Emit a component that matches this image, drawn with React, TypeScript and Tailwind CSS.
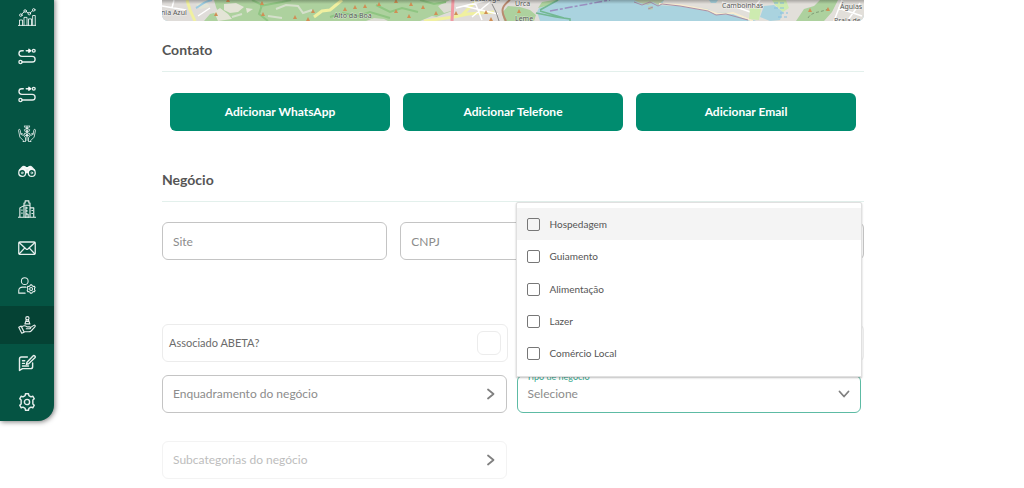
import { useState } from "react";
import type { ReactNode } from "react";
import clsx from "clsx";

type IconProps = { children: ReactNode; stroke?: number };

/** 24px line icon shared by the whole side menu. */
function Icon({ children, stroke = 1.6 }: IconProps) {
  return (
    <svg
      viewBox="0 0 24 24"
      className="size-[18px]"
      fill="none"
      stroke="currentColor"
      strokeWidth={stroke}
      strokeLinecap="round"
      strokeLinejoin="round"
      aria-hidden="true"
    >
      {children}
    </svg>
  );
}

function ChartIcon() {
  return (
    <Icon stroke={1.2}>
      <path d="M.5 23.2h23M2 23v-7h4v7M8 23V12.500h4V23M14 23v-8.500h4V23M19.500 23V10h3.500v13" />
      <circle cx="3.800" cy="9.500" r="1.700" />
      <circle cx="9.500" cy="4" r="1.700" />
      <circle cx="15" cy="7.500" r="1.700" />
      <circle cx="21" cy="2.500" r="1.700" />
      <path d="m5 8.200 3.200-3M11 4.900l2.600 1.700M16.300 6.400l3.300-2.800" />
    </Icon>
  );
}

function RouteIcon() {
  return (
    <Icon stroke={1.8}>
      <circle cx="3.300" cy="20" r="2.100" />
      <circle cx="21" cy="5" r="1.900" />
      <path d="M5.500 20H19a3.800 3.800 0 0 0 0-7.600H5A3.700 3.700 0 0 1 5 5h2M11 5h5" />
      <path d="m14.500 3 2.600 2-2.600 2z" fill="currentColor" />
    </Icon>
  );
}

function HarvestIcon() {
  return (
    <Icon stroke={1.1}>
      <path d="M12 22V2M12 6C9.500 6 8.500 4.500 8.500 2.500 11 2.500 12 4 12 6c0-2 1-3.500 3.500-3.500C15.500 4.500 14.500 6 12 6M12 11c-2.500 0-3.500-1.500-3.500-3.500C11 7.500 12 9 12 11c0-2 1-3.500 3.500-3.500C15.500 9.500 14.500 11 12 11M12 16c-2.500 0-3.500-1.500-3.500-3.500 2.500 0 3.500 1.500 3.500 3.500 0-2 1-3.500 3.500-3.500C15.500 14.500 14.500 16 12 16" />
      <path d="M7 23.500v-1.500L2.500 17.500.7 8.500c0-1.800 2.200-1.800 2.300 0l.8 5 2 1.500M3.800 13.500c.6-1.800 2.200-1 2.600 0l3.600 4.800v5.200H7M17 23.500v-1.500l4.500-4.500 1.800-9c0-1.800-2.200-1.800-2.300 0l-.8 5-2 1.500M20.200 13.500c-.6-1.800-2.200-1-2.600 0L14 18.300v5.200h3" />
    </Icon>
  );
}

function BinocularsIcon() {
  return (
    <Icon stroke={1.7}>
      <circle cx="5.600" cy="14.500" r="4.600" />
      <circle cx="18.400" cy="14.500" r="4.600" />
      <circle cx="5.600" cy="14.500" r="1.200" strokeWidth="1" />
      <circle cx="18.400" cy="14.500" r="1.200" strokeWidth="1" />
      <path d="M1.800 11 5.500 7C6.500 5.500 9.500 5.500 10.300 7.500h3.400C14.500 5.500 17.500 5.500 18.500 7l3.700 4" />
      <path d="M5 9c2-2.500 4.500-2.500 5.500-1h3c1-1.500 3.500-1.500 5.500 1-3-.3-5 2-5.500 5h-3C10 11 8 8.700 5 9Z" fill="currentColor" />
    </Icon>
  );
}

function CityIcon() {
  return (
    <Icon stroke={1.5}>
      <path d="M.5 23h23M2.500 23V10.500L8 7.500V23M8 7V4h1.500V1.200h5V4H16v6M16 23V10.500h5V23M8 7h8" />
      <path d="M12 10v1M12 14v1M12 18v1M5.300 13v1M5.300 17v1M18.500 14h1M18.500 18h1M10.500 23V9M13.500 23v-4" />
    </Icon>
  );
}

function MailIcon() {
  return (
    <Icon stroke={1.7}>
      <rect x="1" y="4" width="22" height="16.500" rx="1.500" />
      <path d="m1.800 5 9 8.300c.7.600 1.700.6 2.400 0l9-8.300M1.800 19.700l7-7.500M22.200 19.700l-7-7.500" />
    </Icon>
  );
}

function UserGearIcon() {
  return (
    <Icon stroke={1.4}>
      <circle cx="9" cy="5.500" r="4.500" />
      <path d="M9.500 21.500H1v-3.500c0-3 2.500-4.500 5-4.500h4.500" />
      <path d="m16 11.700.6-1.200h1.800l.6 1.200 1.500.9 1.400-.1.900 1.500-.8 1.200v1.700l.8 1.200-.9 1.500-1.400-.1-1.500.9-.6 1.300h-1.800l-.6-1.300-1.500-.9-1.400.1-.9-1.500.8-1.200v-1.700l-.8-1.200.9-1.500 1.400.1z" />
      <circle cx="17.500" cy="16" r="2" />
    </Icon>
  );
}

function HandPawnIcon() {
  return (
    <Icon stroke={1.5}>
      <circle cx="12.500" cy="3" r="2.200" />
      <path d="M11 5.200 9.200 10.500h6.600L14 5.200M10.700 7.200h3.600" />
      <path d="m1 15 3.200-1.500 4 8L5 23zM5 14.500c2.500-2 5-1.800 7 0h3.500c1.700 0 1.700 2.500 0 2.500H11M16.500 15.500l4.500-3c1.500-.8 2.700.7 1.500 2L17.500 20c-1 .8-1.700 1-3 1H8.200" />
    </Icon>
  );
}

function NoteIcon() {
  return (
    <Icon stroke={1.9}>
      <path d="M12.500 4H4.500A2.500 2.500 0 0 0 2 6.500V22l4-2.500h11a2.500 2.500 0 0 0 2.500-2.500v-5" />
      <path d="m12 11 8-8.300c1.500-1.500 4 .8 2.500 2.400L14.200 13l-3 .8zM6 9h3M6 12.500h2.500M6 16h8" />
    </Icon>
  );
}

function GearIcon() {
  return (
    <Icon stroke={1.9}>
      <path d="M9.500 3.500 10 1h4l.5 2.500 2.800 1.600 2.400-.8 2 3.400L19.800 9.400v5.200l1.900 1.700-2 3.400-2.400-.8-2.800 1.600L14 23h-4l-.5-2.500-2.800-1.600-2.400.8-2-3.400 1.900-1.700V9.400L2.300 7.700l2-3.400 2.400.8z" />
      <circle cx="12" cy="12" r="3.500" />
    </Icon>
  );
}

const menu = [
  { label: "Indicadores", icon: <ChartIcon /> },
  { label: "Rotas", icon: <RouteIcon /> },
  { label: "Roteiros", icon: <RouteIcon /> },
  { label: "Sustentabilidade", icon: <HarvestIcon /> },
  { label: "Atrativos", icon: <BinocularsIcon /> },
  { label: "Cidades", icon: <CityIcon /> },
  { label: "Mensagens", icon: <MailIcon /> },
  { label: "Usuários", icon: <UserGearIcon /> },
  { label: "Negócios", icon: <HandPawnIcon />, active: true },
  { label: "Formulários", icon: <NoteIcon /> },
  { label: "Configurações", icon: <GearIcon /> },
];

function Sidebar() {
  return (
    <nav className="-mt-0.5 flex h-[423px] w-[54px] shrink-0 flex-col overflow-hidden rounded-br-2xl bg-[#055443] text-white/90 shadow-[1px_1px_5px_rgba(0,0,0,0.5)]">
      {menu.map((item) => (
        <a
          key={item.label}
          href="#"
          aria-label={item.label}
          aria-current={item.active ? "page" : undefined}
          className={clsx("flex flex-1 items-center justify-center", item.active && "bg-[#054234]")}
        >
          {item.icon}
        </a>
      ))}
    </nav>
  );
}

const peaks = [
  [54, 14], [66, 0], [100, 3], [101, 14], [133, 17], [146, 19], [151, 11], [183, 9], [193, 7], [203, 6],
  [217, 4], [234, 1], [234, 11], [249, 4], [247, 16], [261, 7], [274, 13], [294, 13], [324, 12], [329, 19],
  [357, 11], [648, 10], [666, 9],
];

function MapStrip() {
  return (
    <div className="h-[21px] overflow-hidden rounded-b-md">
      <svg viewBox="0 0 702 21" preserveAspectRatio="xMidYMid slice" className="h-full w-full" role="img" aria-label="Mapa">
        <defs>
          <linearGradient id="map-shade" x1="0" y1="0" x2="0" y2="1">
            <stop offset="0" stopColor="#000" stopOpacity="0.250" />
            <stop offset="1" stopColor="#000" stopOpacity="0" />
          </linearGradient>
        </defs>
        <rect width="702" height="21" fill="#aad3df" />
        {/* land */}
        <path d="M0 0h397l-10 5-10 3-2 4 3 9H0z" fill="#dfdcd9" />
        <path d="M502 0h200v21H594l-8-3-18-6-14 1-8-4-30-4-16-1z" fill="#e2dfda" />
        <path d="M472 0h30l-6 5-5-3-5 3-8-2zM486 7l4-1 1 3-4 1z" fill="#b9c9a8" />
        {/* woods */}
        <path d="M52 0h238v11l-8 3-10 4-12 3H42l6-7 8-2-2-5z" fill="#add19e" />
        <path d="M346 6l12 1 10 3 6 5-2 6h-30l-2-8zM380 2l12-2h6l-14 6-8 2zM634 21l8-12 10-3 6-6h18l-6 12-8 9z" fill="#add19e" />
        <path d="M62 4l12-1 8 4-6 5-8 1-6-3zM52 12l6-4 8 6 4 5-14 2zM84 8l7 1-6 4zM34 4l10-3 4 6-10 2z" fill="#e3e4d6" />
        <path d="M276 6l12-6h4v10l-10 3zM204 21l8-3 10 1 4 2zM258 21l12-5 14 3v2z" fill="#dcdcd4" />
        <path d="M90 0l10 5-3 9 9 7M98 6l22-4 9-2M168 17l12-4 16 3 12-4 20 6M214 5l14 7 12-4 16 4M258 0l14 4 12-2" fill="none" stroke="#8fc582" strokeWidth="2" />
        <path d="M114 9l10-4 12 1 5 7 9-3M106 16l14 2M70 17l10-3" fill="none" stroke="#d5e0cb" strokeWidth="2" />
        {/* roads */}
        <path d="M25 0l3 10 5 11M152 17l8-6 8-1 12-10M300 15l14-14M262 21l30-4 14-3 26-2" fill="none" stroke="#f0f0a0" strokeWidth="3" />
        <path d="M12 0l-2 8M0 6l24 4M36 16l12-8M294 8l28-7M312 0l8 20M328 2l-18 15M302 6l34 8M560 2l34 12M598 0l-6 8M672 21l8-21M686 20l12-17M676 8l24 8" fill="none" stroke="#fff" strokeWidth="1.500" />
        <path d="M34 8c6-3 6-6 16-8" fill="none" stroke="#9ccbe0" strokeWidth="2" />
        <path d="M291 0l-1 21" stroke="#f09aa2" strokeWidth="3" />
        <path d="M348 0c-8 6-10 10-4 21" fill="none" stroke="#b98a70" strokeWidth="2" />
        <path d="M330 4l4 8 3 9" fill="none" stroke="#8a8a8a" strokeWidth="1" />
        <path d="M374 13l20 4 14 2v2M378 10l18-10M378 11l24 7" fill="none" stroke="#72b892" strokeWidth="1.500" />
        <path d="M388 11 448 0" stroke="#9a8fc0" strokeWidth="1.500" strokeDasharray="8 2 3 2" />
        {/* coast */}
        <path d="M497 4l20 1 28 5 10 4 16-1 20 8" fill="none" stroke="#f8ecd0" strokeWidth="2" />
        <path d="M472 2l8 3 8-3 8 4 4-2 18 2 28 5 8 4 10-1 22 6M486 9l5-2" fill="none" stroke="#a98fa6" strokeWidth="1" />
        <path d="M588 8l11 1-2 11-10-1zM610 0h14l3 8-6 4-8-7z" fill="#cdebb0" />
        <path d="M602 6l10-1 9 7-3 8-10 1-10-4zM547 0h9l-2 3h-5z" fill="#aad3df" />
        <path d="M612 3h10M612 8h12M618 13h8M616 17h9" stroke="#86bfe0" strokeWidth="1" strokeDasharray="4 2" />
        <path d="M646 18c4-7 12-5 20-9" fill="none" stroke="#7f9d76" strokeDasharray="3 2" />
        {peaks.map(([x, y]) => (
          <path key={`${x}-${y}`} d={`M${x - 2} ${y + 2}l2-4 2 4z`} fill="#d08f55" />
        ))}
        <g fontFamily="'Noto Sans', sans-serif" fontSize="7" fill="#555" stroke="#fff" strokeWidth="1" strokeOpacity="0.500" paintOrder="stroke">
          <text x="-1" y="15">nia Azul</text>
          <text x="172" y="18">Alto da Boa</text>
          <text x="308" y="1">Botafogo</text>
          <text x="353" y="6">Urca</text>
          <text x="353" y="21">Leme</text>
          <text x="560" y="8">Camboinhas</text>
          <text x="678" y="9">Águias</text>
          <text x="672" y="23">Praia de</text>
        </g>
        <rect width="702" height="4" fill="url(#map-shade)" />
      </svg>
    </div>
  );
}

function Chevron({ down }: { down?: boolean }) {
  return (
    <svg
      viewBox="0 0 12 12"
      className="size-3 shrink-0"
      fill="none"
      stroke="#808080"
      strokeWidth="1.800"
      strokeLinecap="round"
      strokeLinejoin="round"
      aria-hidden="true"
    >
      <path d={down ? "m1.500 3.500 4.500 5 4.500-5" : "m3 1.500 5.500 4.500-5.500 4.500"} />
    </svg>
  );
}

function SectionTitle({ children }: { children: ReactNode }) {
  return (
    <h2 className="border-b border-[#e3f0ec] pb-3 text-sm leading-[18px] font-bold text-[#555]">{children}</h2>
  );
}

function TextField({ label }: { label: string }) {
  return (
    <input
      type="text"
      aria-label={label}
      placeholder={label}
      className="h-[38px] w-full min-w-0 rounded-md border border-[#c4c4c4] px-2.5 text-[12px] text-[#555] placeholder:text-[#8c8c8c]"
    />
  );
}

function SelectField({ label, disabled }: { label: string; disabled?: boolean }) {
  return (
    <div className="relative">
      <select
        aria-label={label}
        disabled={disabled}
        className={clsx(
          "h-[38px] w-full appearance-none rounded-md border bg-white px-2.5 text-[12px] opacity-100",
          disabled ? "border-[#f3f3f3] text-[#bdbdbd]" : "border-[#c4c4c4] text-[#8c8c8c]",
        )}
      >
        <option>{label}</option>
      </select>
      <span className="pointer-events-none absolute inset-y-0 right-2.5 flex items-center">
        <Chevron />
      </span>
    </div>
  );
}

function SwitchField({ label }: { label: string }) {
  return (
    <label className="flex h-[38px] items-center justify-between rounded-md border border-[#ececec] px-1.5 text-[11px] text-[#6b6b6b]">
      {label}
      <input type="checkbox" className="size-6 appearance-none rounded-md border border-[#ececec] bg-white" />
    </label>
  );
}

const businessTypes = ["Hospedagem", "Guiamento", "Alimentação", "Lazer", "Comércio Local"];

function BusinessTypeField() {
  const [open, setOpen] = useState(true);
  const [selected, setSelected] = useState<string[]>([]);

  const toggle = (name: string) =>
    setSelected((prev) => (prev.includes(name) ? prev.filter((n) => n !== name) : [...prev, name]));

  return (
    <div className="relative">
      <button
        type="button"
        aria-haspopup="true"
        aria-expanded={open}
        aria-labelledby="business-type-label"
        onClick={() => setOpen(!open)}
        className="flex h-[38px] w-full items-center justify-between rounded-md border border-[#5dbba4] bg-white px-2.5 text-[12px] text-[#8c8c8c]"
      >
        {selected.length ? selected.join(", ") : "Selecione"}
        <Chevron down />
      </button>
      <span
        id="business-type-label"
        className="absolute -top-1 left-2 bg-white px-0.5 text-[9px] leading-3 text-[#3aaa8f]"
      >
        Tipo de negócio
      </span>
      {open && (
        <div className="absolute -inset-x-px bottom-9 z-10 rounded-t-xs border border-[#e0e0e0] bg-white pt-[5px] pb-1.5 shadow-[0_1px_2px_rgba(0,0,0,0.25)]">
          <div className="flex h-[162px] flex-col">
            {businessTypes.map((name, i) => (
              <label
                key={name}
                className={clsx("flex flex-1 items-center gap-2.5 px-2.5 text-[10px] text-[#555]", i === 0 && "bg-[#f4f4f4]")}
              >
                <input
                  type="checkbox"
                  checked={selected.includes(name)}
                  onChange={() => toggle(name)}
                  className="size-[13px] appearance-none rounded-[2px] border border-[#777] checked:bg-[#008c6f]"
                />
                {name}
              </label>
            ))}
          </div>
        </div>
      )}
    </div>
  );
}

export default function App() {
  return (
    <div className="flex items-start bg-white font-[Lato,'Noto_Sans',sans-serif]">
      <Sidebar />
      <main className="min-w-0 flex-1 pr-40 pb-2 pl-[108px]">
        <MapStrip />
        <section className="mt-5">
          <SectionTitle>Contato</SectionTitle>
          <div className="mt-[21px] grid grid-cols-3 gap-[13px] px-2">
            {["WhatsApp", "Telefone", "Email"].map((name) => (
              <button
                key={name}
                type="button"
                className="h-[38px] rounded-md bg-[#008c6f] text-[12px] font-bold text-white"
              >
                Adicionar {name}
              </button>
            ))}
          </div>
        </section>
        <section className="mt-10">
          <SectionTitle>Negócio</SectionTitle>
          <div className="mt-5 grid grid-cols-3 gap-[13px]">
            <TextField label="Site" />
            <TextField label="CNPJ" />
            <TextField label="Cadastur" />
          </div>
          <div className="mt-16 grid grid-cols-2 gap-2.5">
            <SwitchField label="Associado ABETA?" />
            <SwitchField label="" />
          </div>
          <div className="mt-[13px] grid grid-cols-2 gap-x-2.5 gap-y-7 pr-[3px]">
            <SelectField label="Enquadramento do negócio" />
            <BusinessTypeField />
            <SelectField label="Subcategorias do negócio" disabled />
          </div>
        </section>
      </main>
    </div>
  );
}
